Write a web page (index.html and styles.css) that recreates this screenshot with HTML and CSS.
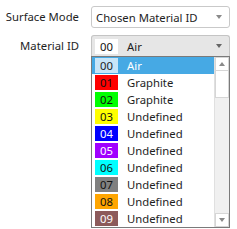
FILE: index.html
```html
<!DOCTYPE html>
<html lang="en">
<head>
    <meta charset="UTF-8">
    <title>Surface Mode</title>
    <link rel="stylesheet" href="styles.css">
</head>
<body>
    <div class="form">
        <div class="form-row row-mode">
            <label class="form-label">Surface Mode</label>
            <div class="combo">
                <span class="combo-text">Chosen Material ID</span>
                <span class="arrow"></span>
            </div>
        </div>

        <div class="form-row row-material">
            <label class="form-label">Material ID</label>
            <div class="combo-wrap">
                <div class="combo combo-open">
                    <span class="swatch swatch-plain">00</span>
                    <span class="combo-text">Air</span>
                    <span class="arrow arrow-dark"></span>
                </div>

                <div class="popup">
                    <ul class="list">
                        <li class="item selected"><span class="swatch swatch-sel">00</span>Air</li>
                        <li class="item"><span class="swatch" style="background:#ff0000">01</span>Graphite</li>
                        <li class="item"><span class="swatch" style="background:#00ff00">02</span>Graphite</li>
                        <li class="item"><span class="swatch" style="background:#ffff00">03</span>Undefined</li>
                        <li class="item"><span class="swatch light" style="background:#0000ff">04</span>Undefined</li>
                        <li class="item"><span class="swatch light" style="background:#a000ff">05</span>Undefined</li>
                        <li class="item"><span class="swatch" style="background:#00ffff">06</span>Undefined</li>
                        <li class="item"><span class="swatch" style="background:#808080">07</span>Undefined</li>
                        <li class="item"><span class="swatch" style="background:#ffa500">08</span>Undefined</li>
                        <li class="item"><span class="swatch light" style="background:#8c5a5a">09</span>Undefined</li>
                    </ul>
                    <div class="scrollbar">
                        <div class="sb-btn"><span class="sb-up"></span></div>
                        <div class="sb-thumb"></div>
                        <div class="sb-track"></div>
                        <div class="sb-btn"><span class="sb-down"></span></div>
                    </div>
                </div>
            </div>
        </div>
    </div>
</body>
</html>
```

FILE: styles.css
```css
body {
    margin: 0;
    background-color: white;
    font-family: 'Noto Sans', 'Open Sans', sans-serif;
    font-size: 11.3px;
    color: #1e1e1e;
}

.form {
    padding-top: 6px;
}

.form-row {
    display: grid;
    grid-template-columns: 80px 139px;
    column-gap: 11px;
    align-items: start;
}

.row-material {
    margin-top: 7px;
}

.form-label {
    text-align: right;
    line-height: 22px;
    padding-right: 1px;
}

.row-material .form-label {
    line-height: 21px;
}

.combo {
    display: flex;
    align-items: center;
    height: 22px;
    box-sizing: border-box;
    border: 1px solid #c9c9c9;
    border-radius: 3px;
    background-color: white;
    padding-left: 4px;
    padding-right: 7px;
}

.combo-text {
    flex: 1;
}

.combo-wrap {
    display: flex;
    flex-direction: column;
}

.combo-open {
    height: 21px;
    background-color: #e6e6e6;
    border-color: #c4c4c4;
    border-bottom: none;
    border-radius: 3px 3px 0 0;
    padding-left: 3px;
}

.combo-open .swatch {
    margin-top: 1px;
}

.arrow {
    width: 0;
    height: 0;
    border-left: 3.5px solid transparent;
    border-right: 3.5px solid transparent;
    border-top: 4px solid #8a8a8a;
}

.arrow-dark {
    border-top-color: #666;
}

.swatch {
    display: inline-block;
    width: 23px;
    height: 15px;
    line-height: 15px;
    text-align: center;
    margin-right: 9px;
    color: #111;
}

.swatch-plain {
    background-color: white;
}

.swatch.light {
    color: white;
}

.popup {
    height: 172px;
    box-sizing: border-box;
    border: 1px solid #7a7a7a;
    background-color: white;
    display: flex;
}

.list {
    list-style: none;
    margin: 0;
    padding: 0;
    flex: 1;
}

.item {
    display: flex;
    align-items: center;
    height: 17px;
    padding-left: 3px;
}

.item.selected {
    background-color: #46a9e4;
    color: white;
}

.swatch-sel {
    background-color: #c8e5f8;
    color: #1e1e1e;
}

.scrollbar {
    width: 14px;
    display: flex;
    flex-direction: column;
    background-color: #f0f0f0;
    border-left: 1px solid #e0e0e0;
}

.sb-btn {
    height: 14px;
    background-color: white;
    border: 1px solid #d6d6d6;
    box-sizing: border-box;
    display: flex;
    align-items: center;
    justify-content: center;
}

.sb-thumb {
    height: 27px;
    background-color: white;
    border: 1px solid #d6d6d6;
    border-top: none;
    box-sizing: border-box;
}

.sb-track {
    flex: 1;
}

.sb-up,
.sb-down {
    width: 0;
    height: 0;
    border-left: 3.5px solid transparent;
    border-right: 3.5px solid transparent;
}

.sb-up {
    border-bottom: 4px solid #8a8a8a;
}

.sb-down {
    border-top: 4px solid #8a8a8a;
}
```
